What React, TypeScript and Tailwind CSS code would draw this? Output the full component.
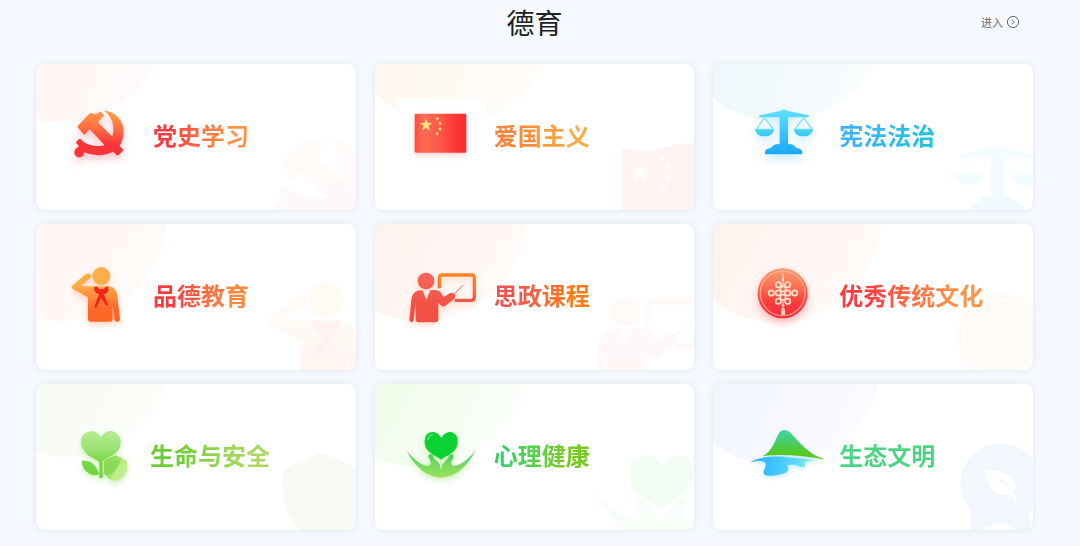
import type { ReactNode } from 'react';

type Stop = [offset: number, color: string];

function Gradient({ id, from, to, stops }: { id: string; from: [number, number]; to: [number, number]; stops: Stop[] }) {
  return (
    <linearGradient id={id} gradientUnits="userSpaceOnUse" x1={from[0]} y1={from[1]} x2={to[0]} y2={to[1]}>
      {stops.map(([offset, color]) => (
        <stop key={offset} offset={offset} stopColor={color} />
      ))}
    </linearGradient>
  );
}

function starPoints(cx: number, cy: number, r: number, turn = 0) {
  const points: string[] = [];
  for (let i = 0; i < 10; i++) {
    const radius = i % 2 === 0 ? r : r * 0.4;
    const angle = ((i * 36 - 90 + turn) * Math.PI) / 180;
    points.push(`${(cx + radius * Math.cos(angle)).toFixed(1)},${(cy + radius * Math.sin(angle)).toFixed(1)}`);
  }
  return points.join(' ');
}

function Emblem({ id }: { id: string }) {
  return (
    <g fill={`url(#${id})`}>
      <Gradient id={id} from={[215, 166]} to={[205, 290]} stops={[[0, '#ff9f47'], [0.45, '#fd6a42'], [0.8, '#fa343b'], [1, '#fa343b']]} />
      <path d="M222 166C262 168 286 205 280 240C278 254 274 264 268 272L278 281Q281 284 278 287L266 299Q263 302 260 299L249 289C222 303 190 302 163 291C162 300 156 306 147 306C138 306 133 299 133 291C133 283 138 278 145 276L146 271L139 264Q137 261 139 259L147 251Q150 249 153 252L161 260C180 272 208 275 228 268L246 246C256 214 248 186 222 166Z" />
      <path d="M144 211L178 175Q181 172 186 174Q200 179 207 171Q211 168 214 171L222 180L204 201L265 262L240 286L179 222L165 236Q162 239 160 236L144 217Q142 214 144 211Z" />
    </g>
  );
}

function Flag({ id }: { id: string }) {
  return (
    <g>
      <Gradient id={id} from={[134, 0]} to={[289, 0]} stops={[[0, '#f9503f'], [0.2, '#ff6b54'], [0.5, '#fd5648'], [0.85, '#fa3333'], [1, '#f82c2e']]} />
      <rect x="134" y="175" width="155" height="117" rx="4" fill={`url(#${id})`} />
      <g fill="#ffe07c">
        <polygon points={starPoints(168, 209, 20)} />
        <polygon points={starPoints(202, 190, 7, 10)} />
        <polygon points={starPoints(210, 204, 7, 30)} />
        <polygon points={starPoints(210, 221, 7, 0)} />
        <polygon points={starPoints(202, 235, 7, 20)} />
      </g>
    </g>
  );
}

function WavingFlag() {
  return (
    <g>
      <path d="M754 278C790 290 835 290 870 280C910 267 940 262 990 265V480H754Z" fill="#fff4f3" />
      <g fill="#fff" opacity=".75">
        <polygon points={starPoints(810, 353, 34)} />
        <polygon points={starPoints(876, 308, 15, 10)} />
        <polygon points={starPoints(893, 335, 15, 30)} />
        <polygon points={starPoints(894, 367, 15, 0)} />
        <polygon points={starPoints(879, 397, 15, 20)} />
      </g>
    </g>
  );
}

function Scales({ id }: { id: string }) {
  return (
    <g>
      <Gradient id={id} from={[237, 162]} to={[237, 297]} stops={[[0, '#5fe0ff'], [0.4, '#45c8fb'], [1, '#1ba8f3']]} />
      <Gradient id={`${id}-bowl`} from={[0, 219]} to={[0, 243]} stops={[[0, '#74e6f2'], [0.3, '#45d2f5'], [1, '#35c6ee']]} />
      <path d="M178 187L155 221M179 187L204 221M295 187L271 221M296 187L320 221" fill="none" stroke="#79e3f6" strokeWidth="4" />
      <path d="M149 220H208C206 235 195 243 179 243C163 243 152 235 149 220ZM266 220H325C322 235 311 243 295 243C279 243 268 235 266 220Z" fill={`url(#${id}-bowl)`} />
      <path d="M164 180L228 166Q237 159 246 166L310 180Q314 183 310 186H249V266Q261 266 265 269Q271 272 273 277Q291 280 292 290V294Q292 297 289 297H183Q180 297 180 294V290Q181 280 199 277Q201 272 207 269Q211 266 224 266V186H164Q160 183 164 180Z" fill={`url(#${id})`} />
    </g>
  );
}

function Salute({ id }: { id: string }) {
  return (
    <g>
      <Gradient id={id} from={[0, 147]} to={[0, 311]} stops={[[0, '#ffb14b'], [0.35, '#feac48'], [0.75, '#fe6827'], [1, '#fe6425']]} />
      <g fill={`url(#${id})`}>
        <circle cx="214" cy="174" r="27" />
        <path d="M128 202L167 169C174 165 184 166 184 174C184 179 182 181 178 183L153 203C165 205 180 205 192 205H235C252 205 260 216 262 235L270 302C270 308 267 311 261 311C256 311 254 308 253 303L248 262V303Q248 311 240 311H182Q174 311 174 303V238L130 214Q122 208 128 202Z" />
      </g>
      <path d="M193 206H202C205 216 224 216 227 206H235C237 220 230 228 221 229L236 263L227 260L213 241L198 271L193 265L208 228C196 226 191 217 193 206Z" fill="#f0241d" />
    </g>
  );
}

function Teacher({ id }: { id: string }) {
  return (
    <g>
      <Gradient id={id} from={[0, 164]} to={[0, 313]} stops={[[0, '#f8675c'], [0.6, '#f35347'], [1, '#f05043']]} />
      <Gradient id={`${id}-board`} from={[0, 166]} to={[0, 252]} stops={[[0, '#fd8524'], [0.4, '#fb7a2c'], [1, '#f2564a']]} />
      <path d="M208 211V180Q208 171 217 171H304Q313 171 313 180V238Q313 247 304 247H254" fill="none" stroke={`url(#${id}-board)`} strokeWidth="10" />
      <path d="M248 233L279 202" stroke="#f2604f" strokeWidth="3" strokeLinecap="round" />
      <g fill={`url(#${id})`}>
        <circle cx="168" cy="189" r="25" />
        <path d="M118 305L124 245Q128 218 150 217H157L169 245L181 217Q205 214 213 224L221 237L239 226Q250 221 256 231Q257 240 250 245L226 263Q218 268 212 262L205 254V303Q205 313 195 313H147Q137 313 137 303V255L131 306Q130 313 124 313Q118 312 118 305Z" />
      </g>
    </g>
  );
}

const knotRings = [
  [220, 200], [248, 200],
  [234, 213],
  [199, 225], [220, 225], [248, 225], [269, 225],
  [234, 238],
  [220, 250], [248, 250],
];

function Knot({ id }: { id: string }) {
  return (
    <g>
      <Gradient id={id} from={[0, 151]} to={[0, 301]} stops={[[0, '#fc9a6a'], [0.3, '#fb7a59'], [0.7, '#fb383d'], [1, '#fb2d3b']]} />
      <circle cx="233" cy="226" r="75" fill={`url(#${id})`} />
      <circle cx="233" cy="226" r="67" fill="none" stroke="#fdb4a1" strokeWidth="4" opacity=".8" />
      <g fill="none" stroke="#fee3cb" strokeWidth="5">
        <path d="M234 166V204M234 248V270" strokeWidth="3" />
        {knotRings.map(([cx, cy]) => (
          <circle key={`${cx}-${cy}`} cx={cx} cy={cy} r="8" />
        ))}
      </g>
      <path d="M231 180H237V188H231ZM230 260H238V265H230ZM229 270H239V275H229ZM228 277H240V290H228Z" fill="#fee3cb" />
    </g>
  );
}

function CoinMark() {
  return (
    <g>
      <circle cx="888" cy="358" r="131" fill="#fffaf7" />
      <circle cx="888" cy="358" r="112" fill="#fefaf6" stroke="#fff" strokeWidth="6" />
    </g>
  );
}

function Flower({ id }: { id: string }) {
  return (
    <g>
      <Gradient id={id} from={[0, 162]} to={[0, 304]} stops={[[0, '#b7ea91'], [0.35, '#9de277'], [0.65, '#7bd748'], [1, '#6fd23a']]} />
      <Gradient id={`${id}-shield`} from={[225, 255]} to={[285, 290]} stops={[[0, '#8add55'], [0.5, '#9fe265'], [0.62, '#bdec88'], [1, '#c7ee94']]} />
      <g fill={`url(#${id})`}>
        <path d="M213 181C222 163 243 156 258 168C274 179 276 200 267 216C258 232 239 238 218 252V304H208V257C204 250 196 249 178 237C160 224 150 204 154 187C158 163 196 150 213 181Z" />
        <path d="M155 252C180 246 201 266 208 292C184 303 155 280 155 252Z" />
      </g>
      <path d="M252 236Q256 234 260 236L286 248Q291 250 291 256V275C291 290 277 311 256 311C236 311 221 290 221 275V256Q221 250 226 248Z" fill={`url(#${id}-shield)`} />
      <path d="M218 290C225 264 250 243 270 250C268 275 245 296 224 294Z" fill="#7bd748" opacity=".55" />
    </g>
  );
}

function ShieldMark() {
  return <path d="M862 230Q872 225 882 230L980 273V459H932Q872 480 812 459C780 435 757 400 757 345V290Q757 276 768 271Z" fill="#f7faf3" />;
}

function Care({ id }: { id: string }) {
  const hand = 'M110 221C130 245 152 264 172 266C184 266 186 258 176 243C172 234 180 229 188 234C190 244 198 250 206 258C212 266 213 276 213 288V302C170 300 135 270 110 221Z';
  return (
    <g>
      <Gradient id={id} from={[0, 222]} to={[0, 302]} stops={[[0, '#2bcf63'], [0.45, '#6fd960'], [1, '#9ee15d']]} />
      <path d="M214 184C222 164 246 158 258 174C268 190 264 212 248 226C236 236 222 240 213 248C204 240 190 236 179 226C162 212 160 190 169 174C181 158 206 164 214 184Z" fill="#0bd233" />
      <path d="M173 188Q176 174 188 173" fill="none" stroke="#8cf09c" strokeWidth="3" strokeLinecap="round" />
      <g fill={`url(#${id})`}>
        <path d={hand} />
        <path d={hand} transform="matrix(-1 0 0 1 426 0)" />
      </g>
    </g>
  );
}

function Landscape({ id }: { id: string }) {
  return (
    <g>
      <Gradient id={id} from={[0, 160]} to={[0, 240]} stops={[[0, '#3fd6a4'], [0.5, '#4acb5e'], [0.85, '#58c922'], [1, '#58c922']]} />
      <Gradient id={`${id}-lake`} from={[135, 0]} to={[335, 0]} stops={[[0, '#2fa9f8'], [0.3, '#3cc0fd'], [0.65, '#58d5fb'], [0.85, '#7fe5ea'], [1, '#e2f8e6']]} />
      <path d="M133 257C160 240 200 236 240 240C280 243 310 246 345 250Q320 253 300 255L300 268Q292 272 280 266C265 262 255 262 246 266C254 275 250 284 238 289C220 296 195 298 182 295Q174 292 176 282L182 268Q184 255 172 253C160 251 145 253 133 257Z" fill={`url(#${id}-lake)`} />
      <path d="M172 237C200 225 210 192 219 174C227 155 245 156 257 168C285 198 312 234 362 248C300 236 230 230 172 237Z" fill={`url(#${id})`} />
    </g>
  );
}

function LeafMark() {
  return (
    <g>
      <path d="M887 200A120 120 0 0 1 976 401V470H942Q915 440 887 439Q860 438 828 459V470H798V401A120 120 0 0 1 887 200Z" fill="#f2f6fd" />
      <path d="M838 280C880 278 930 290 930 325C930 345 915 354 898 354C862 354 846 318 838 280Z" fill="#fff" />
      <path d="M876 305Q912 320 926 352" fill="none" stroke="#f2f6fd" strokeWidth="5" />
      <path d="M898 328Q922 344 932 374" fill="none" stroke="#fff" strokeWidth="8" strokeLinecap="round" />
    </g>
  );
}

interface Topic {
  id: string;
  label: string;
  text: string;
  glow: string;
  blob: { cx: number; cy: number; from: string; to: string; plate?: boolean };
  icon: ReactNode;
  iconClass?: string;
  mark: ReactNode;
}

// Artwork is drawn at three units per pixel, from these card origins.
const columnX = [18, 15, 27];
const rowY = [26, 18, 21];
const iconX = [90, 93, 123];
const columnPadding = ['pl-6', 'pl-[26px]', 'pl-[33px]'];

const topics: Topic[] = [
  {
    id: 'party',
    label: '党史学习',
    text: 'from-[#fd3a40] from-20% to-[#ff9247] to-80%',
    glow: 'drop-shadow-[0_4px_4px_rgba(250,52,59,0.3)]',
    blob: { cx: 90, cy: -113, from: '#fff6f3', to: '#fffafa' },
    icon: <Emblem id="party" />,
    mark: <g opacity=".035" transform="translate(501 -45) scale(1.75)"><Emblem id="party-mark" /></g>,
  },
  {
    id: 'patriot',
    label: '爱国主义',
    text: 'from-[#ff8138] from-20% to-[#fbaa40] to-80%',
    glow: 'drop-shadow-[0_3px_3px_rgba(250,52,59,0.2)]',
    blob: { cx: 237, cy: -110, from: '#fff6ef', to: '#fffcf7', plate: true },
    icon: <Flag id="flag" />,
    mark: <WavingFlag />,
  },
  {
    id: 'law',
    label: '宪法法治',
    text: 'from-[#3bb4ff] from-20% to-[#20c4e2] to-80%',
    glow: 'drop-shadow-[0_5px_4px_rgba(40,170,220,0.25)]',
    blob: { cx: 223, cy: -117, from: '#eef7fb', to: '#f7fcfd' },
    icon: <Scales id="scales" />,
    mark: <g opacity=".07" transform="translate(529 32) scale(1.47)"><Scales id="scales-mark" /></g>,
  },
  {
    id: 'moral',
    label: '品德教育',
    text: 'from-[#fd3a40] from-20% to-[#ff8840] to-80%',
    glow: 'drop-shadow-[0_3px_3px_rgba(254,104,39,0.3)]',
    blob: { cx: 95, cy: -5, from: '#fff5f2', to: '#fffbf9' },
    icon: <Salute id="salute" />,
    mark: <g opacity=".06" transform="translate(472 -90) scale(1.93)"><Salute id="salute-mark" /></g>,
  },
  {
    id: 'ideology',
    label: '思政课程',
    text: 'from-[#f2524b] from-20% to-[#ff7a12] to-80%',
    glow: 'drop-shadow-[0_3px_3px_rgba(250,120,50,0.25)]',
    blob: { cx: 150, cy: -5, from: '#fef2ed', to: '#fffaf8' },
    icon: <Teacher id="teacher" />,
    mark: <g opacity=".04" transform="translate(470 -50) scale(1.76)"><Teacher id="teacher-mark" /></g>,
  },
  {
    id: 'culture',
    label: '优秀传统文化',
    text: 'from-[#fd3a40] from-20% to-[#ff9247] to-80%',
    glow: 'drop-shadow-[0_4px_4px_rgba(250,52,59,0.35)]',
    blob: { cx: 216, cy: -3, from: '#fff2ed', to: '#fffaf8' },
    icon: <Knot id="knot" />,
    mark: <CoinMark />,
  },
  {
    id: 'safety',
    label: '生命与安全',
    text: 'from-[#6bcc33] from-20% to-[#a8d95c] to-80%',
    glow: 'drop-shadow-[0_3px_3px_rgba(123,215,72,0.35)]',
    blob: { cx: 105, cy: -75, from: '#f7fbf2', to: '#fbfdf9' },
    icon: <Flower id="flower" />,
    iconClass: 'w-[77px]',
    mark: <ShieldMark />,
  },
  {
    id: 'mental',
    label: '心理健康',
    text: 'from-[#33d363] from-15% to-[#74cc1c] to-75%',
    glow: 'drop-shadow-[0_3px_3px_rgba(158,225,93,0.45)]',
    blob: { cx: 150, cy: -45, from: '#effce8', to: '#fafef8' },
    icon: <Care id="care" />,
    mark: <g opacity=".05" transform="translate(464 -82) scale(1.92)"><Care id="care-mark" /></g>,
  },
  {
    id: 'ecology',
    label: '生态文明',
    text: 'from-[#4ad582] to-[#4ad582]',
    glow: 'drop-shadow-[0_2px_2px_rgba(60,192,253,0.3)]',
    blob: { cx: 218, cy: -52, from: '#f2f5fe', to: '#fafbfe' },
    icon: <Landscape id="landscape" />,
    mark: <LeafMark />,
  },
];

function TopicCard({ topic, index }: { topic: Topic; index: number }) {
  const column = index % 3;
  const row = Math.floor(index / 3);
  const x = columnX[column];
  const y = rowY[row];
  const { blob } = topic;
  const iconWidth = topic.iconClass ? 231 : 240;
  return (
    <a
      href={`#${topic.id}`}
      className={`relative flex h-[146px] items-center gap-[13px] overflow-hidden rounded-lg bg-white shadow-[0_0_6px_rgba(170,185,205,0.3)] ${columnPadding[column]}`}
    >
      <svg aria-hidden="true" viewBox={`${x} ${y} 540 330`} className="absolute top-0 left-0 h-[110px] w-[180px]">
        <Gradient id={`${topic.id}-blob`} from={[x, y]} to={[blob.cx + 200, blob.cy + 240]} stops={[[0, blob.from], [1, blob.to]]} />
        <circle cx={blob.cx} cy={blob.cy} r="315" fill={`url(#${topic.id}-blob)`} />
        {blob.plate && <rect x="80" y="129" width="265" height="200" fill="#fff" />}
      </svg>
      <svg aria-hidden="true" viewBox={`${x + 657} ${y + 168} 300 270`} className="absolute right-0 bottom-0 h-[90px] w-[100px]">
        {topic.mark}
      </svg>
      <svg
        aria-hidden="true"
        viewBox={`${iconX[column]} ${y + 99} ${iconWidth} 240`}
        className={`relative h-20 shrink-0 ${topic.iconClass ?? 'w-20'} ${topic.glow}`}
      >
        {topic.icon}
      </svg>
      <span className={`relative mb-1 bg-linear-to-r bg-clip-text text-2xl font-bold whitespace-nowrap text-transparent ${topic.text}`}>
        {topic.label}
      </span>
    </a>
  );
}

export default function App() {
  return (
    <main
      lang="zh-CN"
      className="min-h-screen bg-[#f6f9ff] pr-[47px] pb-4 pl-9 font-['Noto_Sans_CJK_SC','Noto_Sans',sans-serif]"
    >
      <header className="mb-5 grid h-11 grid-cols-[1fr_auto_1fr] items-center">
        <h1 className="col-start-2 text-[28px] leading-9 font-normal text-[#222]">德育</h1>
        <a href="#all" className="mr-3.5 flex items-center gap-1 justify-self-end text-[11px] leading-4 text-[#666]">
          进入
          <svg aria-hidden="true" viewBox="0 0 12 12" className="size-3 overflow-visible" fill="none" stroke="currentColor">
            <circle cx="6" cy="6" r="5.6" />
            <path d="M4.8 3.8L7.4 6L4.8 8.2" strokeWidth=".9" />
          </svg>
        </a>
      </header>
      <nav aria-label="德育" className="grid grid-cols-3 gap-x-[19px] gap-y-3.5">
        {topics.map((topic, index) => (
          <TopicCard key={topic.id} topic={topic} index={index} />
        ))}
      </nav>
    </main>
  );
}
